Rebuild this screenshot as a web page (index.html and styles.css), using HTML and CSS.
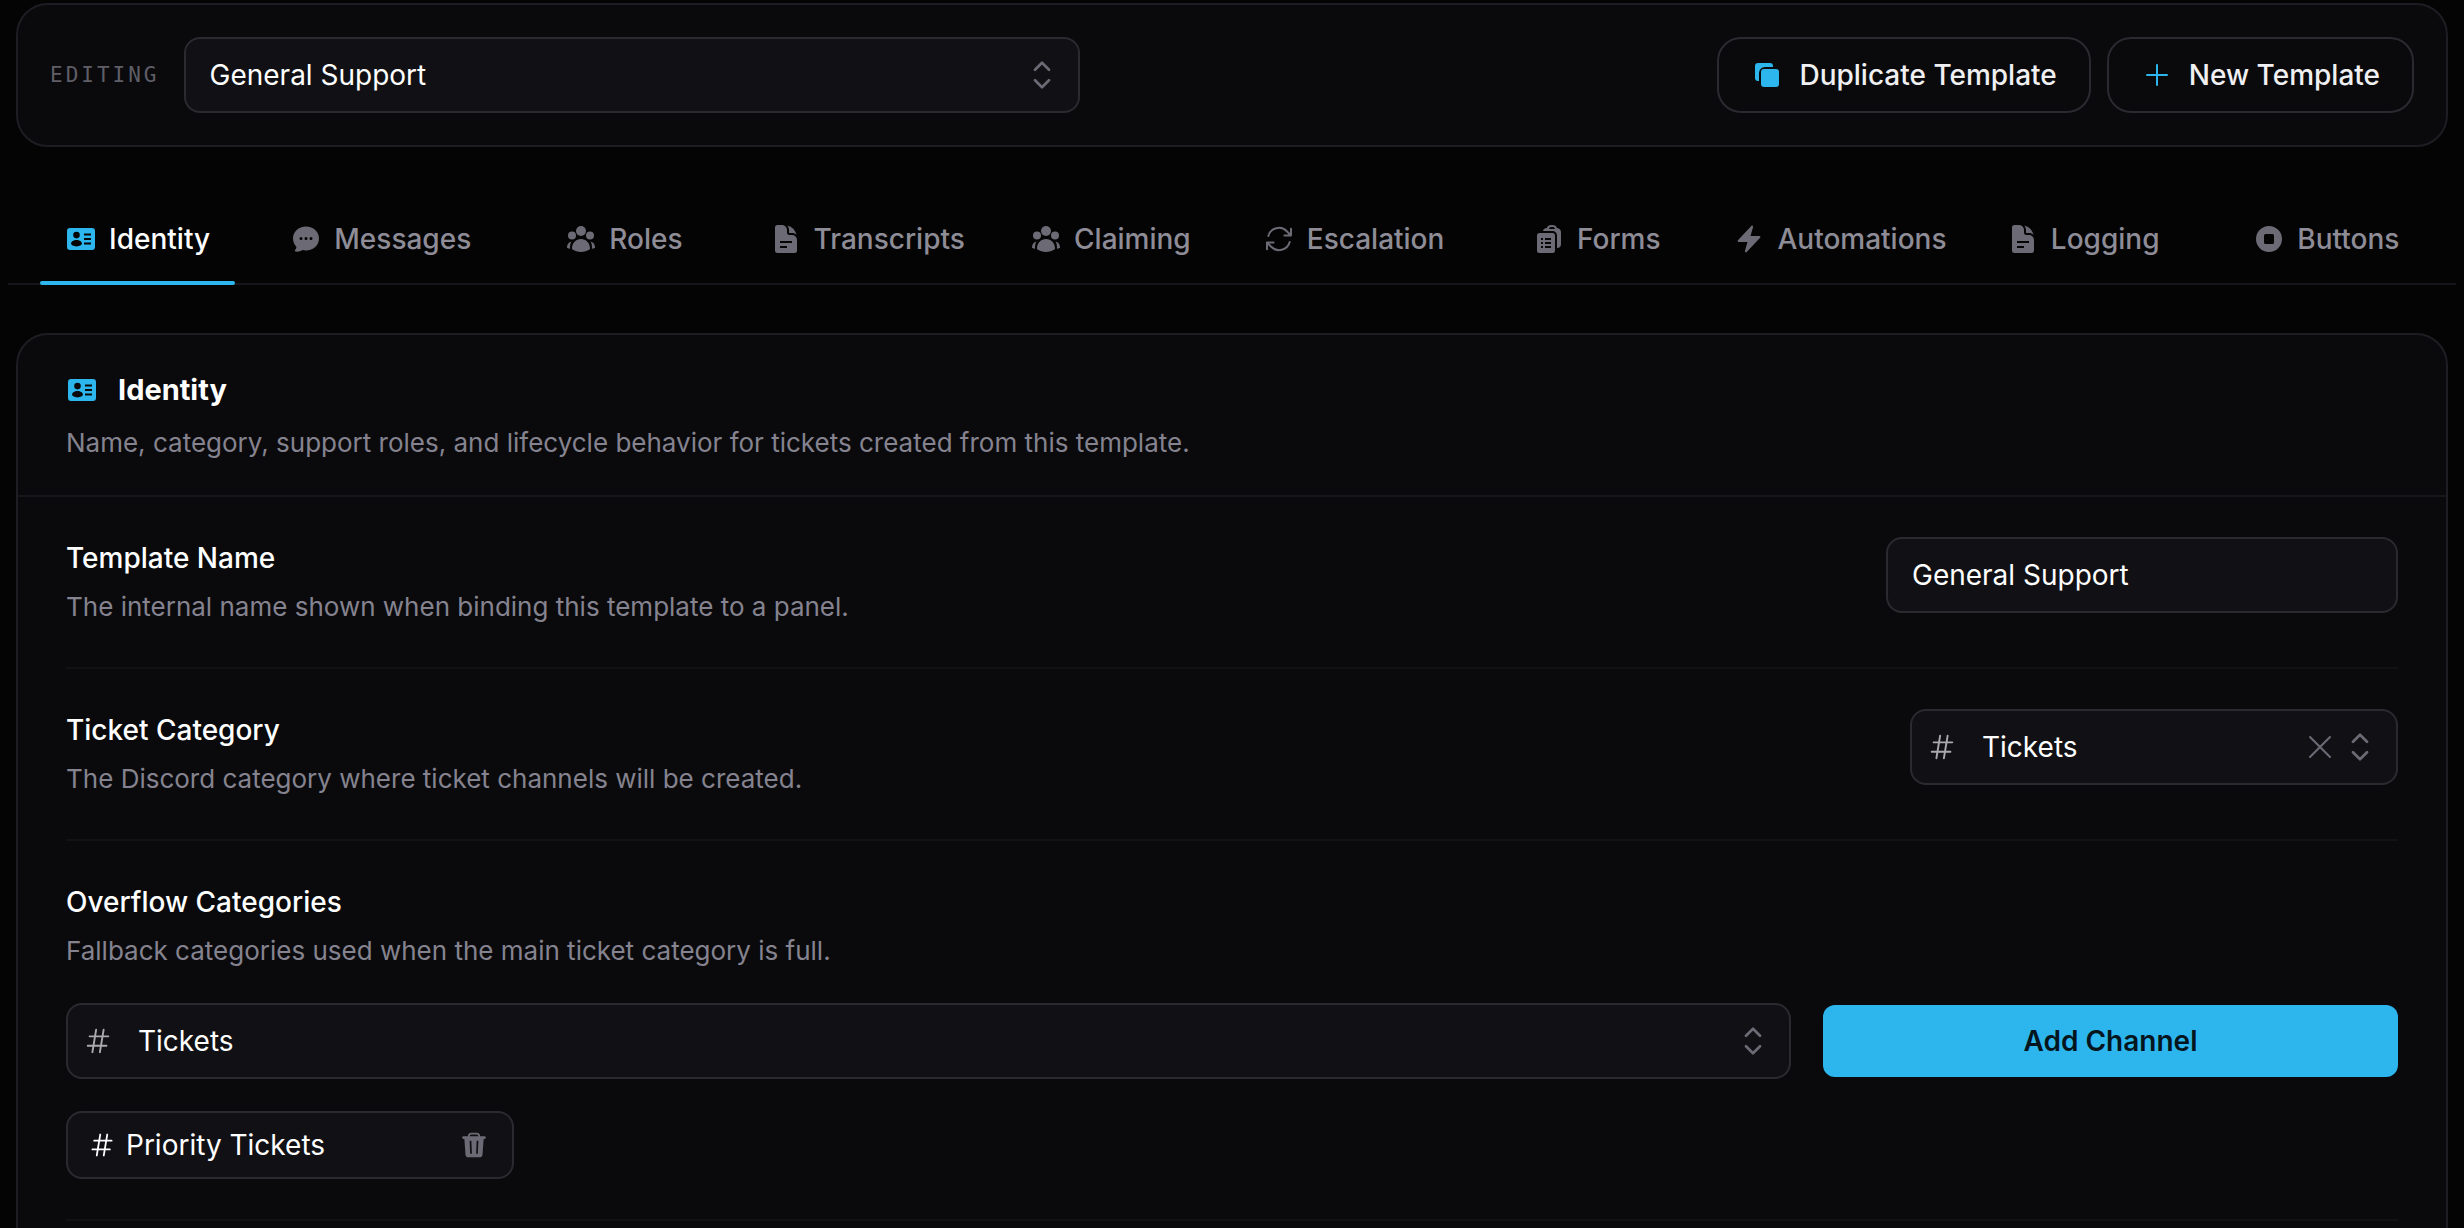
FILE: index.html
```html
<!DOCTYPE html>
<html lang="en">
<head>
    <meta charset="UTF-8">
    <meta name="viewport" content="width=device-width, initial-scale=1.0">
    <title>Ticket Templates</title>
    <link rel="stylesheet" href="styles.css">
</head>
<body>

<!-- Icon set -->
<svg class="sprite" aria-hidden="true">
    <symbol id="icon-identity" viewBox="0 0 32 32">
        <path fill-rule="evenodd" d="M5 5h22a3 3 0 0 1 3 3v16a3 3 0 0 1-3 3H5a3 3 0 0 1-3-3V8a3 3 0 0 1 3-3zM11.500 8.800a3.300 3.300 0 1 0 0 6.600 3.300 3.300 0 0 0 0-6.600zM6 20.600c0 1.600 2.400 2.800 5.500 2.800s5.500-1.200 5.500-2.800c0-1.900-2.400-3.600-5.500-3.600S6 18.700 6 20.600zM19 10.500v2h7v-2zM19 15v2h7v-2zM19 19.500v2h7v-2z"/>
    </symbol>
    <symbol id="icon-messages" viewBox="0 0 32 32">
        <path fill-rule="evenodd" d="M16 3.500c7.400 0 13 5.200 13 12s-5.600 12-13 12c-1.200 0-2.400-.1-3.500-.4-1.900 1.200-4.300 1.800-6.700 1.500-.9-.1-1.300-.9-.7-1.600.8-.9 1.300-2 1.300-3.200C4.300 21.600 3 18.700 3 15.500c0-6.800 5.600-12 13-12zM11 14a1.500 1.500 0 1 0 0 3 1.500 1.500 0 0 0 0-3zm5 0a1.500 1.500 0 1 0 0 3 1.500 1.500 0 0 0 0-3zm5 0a1.500 1.500 0 1 0 0 3 1.500 1.500 0 0 0 0-3z"/>
    </symbol>
    <symbol id="icon-group" viewBox="0 0 32 32">
        <circle cx="16" cy="8" r="5"/>
        <circle cx="7" cy="12.500" r="4"/>
        <circle cx="25" cy="12.500" r="4"/>
        <path d="M7 25.500c0-5.600 4-9.500 9-9.500s9 3.900 9 9.500c0 .5-.2.900-.6 1.100-2.300 1.500-5.200 2.400-8.400 2.400s-6.100-.9-8.400-2.400c-.4-.2-.6-.6-.6-1.100z"/>
        <path d="M6.500 18.500c-1.200 2.100-1.700 4.400-1.400 7.300-1-.1-2-.4-2.700-.8-.3-.1-.4-.3-.4-.6 0-3 1.700-5.500 4.500-5.900z"/>
        <path d="M25.500 18.500c1.200 2.100 1.700 4.400 1.400 7.300 1-.1 2-.4 2.700-.8.3-.1.400-.3.400-.6 0-3-1.700-5.500-4.500-5.900z"/>
    </symbol>
    <symbol id="icon-document" viewBox="0 0 32 32">
        <path fill-rule="evenodd" d="M7.500 2H12a5 5 0 0 1 5 5v2.500A2.500 2.500 0 0 0 19.500 12H22a5 5 0 0 1 5 5v10.500a2.500 2.500 0 0 1-2.500 2.500h-17A2.500 2.500 0 0 1 5 27.500v-23A2.500 2.500 0 0 1 7.500 2zM10 18v2h12v-2zM10 23v2h7v-2z"/>
        <path d="M17.300 2.400c1 1.300 1.700 2.900 1.700 4.600v2.500c0 .3.200.5.500.5H22c1.700 0 3.300.6 4.600 1.700A13.400 13.400 0 0 0 17.300 2.400z"/>
    </symbol>
    <symbol id="icon-refresh" viewBox="0 0 32 32">
        <path fill="none" stroke="currentColor" stroke-width="2" stroke-linecap="round" stroke-linejoin="round" d="M21.400 12.500h6.600m0 0V5.800m0 6.700-4.200-4.300A11 11 0 0 0 5.300 13M4 26.200v-6.700m0 0h6.600m-6.600 0 4.200 4.300A11 11 0 0 0 26.700 19"/>
    </symbol>
    <symbol id="icon-forms" viewBox="0 0 32 32">
        <path fill-rule="evenodd" d="M6.500 10h13a2.500 2.500 0 0 1 2.500 2.500v15a2.500 2.500 0 0 1-2.500 2.500h-13A2.500 2.500 0 0 1 4 27.500v-15A2.500 2.500 0 0 1 6.500 10zM8 15v2h2v-2zm4 0v2h6v-2zM8 19v2h2v-2zm4 0v2h6v-2zM8 23v2h2v-2zm4 0v2h6v-2z"/>
        <path fill-rule="evenodd" d="M10 8h9.500a4.500 4.500 0 0 1 4.500 4.500V25a4 4 0 0 0 4-4V9c0-2.200-1.700-3.900-3.900-4.100A4.500 4.500 0 0 0 20 2h-2a4.500 4.500 0 0 0-4.200 3C11.700 5.200 10.200 6.200 10 8zM16 6c.2-1.200 1-2 2-2h2c1 0 1.800.8 2 2z"/>
    </symbol>
    <symbol id="icon-bolt" viewBox="0 0 32 32">
        <path d="M19.500 2.800c.5.200.7.700.6 1.300L17.500 13H26.400c.9 0 1.300 1 .7 1.700l-13.400 14.200c-.8.800-2 .2-1.800-.9L14.500 19H5.600c-.9 0-1.300-1-.7-1.700L18.300 2.900c.3-.3.800-.4 1.200-.1z"/>
    </symbol>
    <symbol id="icon-stop" viewBox="0 0 32 32">
        <path fill-rule="evenodd" d="M16 3a13 13 0 1 0 0 26 13 13 0 0 0 0-26zM12.500 11h7a1.500 1.500 0 0 1 1.500 1.500v7a1.500 1.500 0 0 1-1.500 1.500h-7a1.500 1.500 0 0 1-1.500-1.500v-7a1.500 1.500 0 0 1 1.500-1.500z"/>
    </symbol>
    <symbol id="icon-duplicate" viewBox="0 0 32 32">
        <path d="M7 4h12a3 3 0 0 1 3 3v1h-8a6 6 0 0 0-6 6v8H7a3 3 0 0 1-3-3V7a3 3 0 0 1 3-3z"/>
        <rect x="10" y="10" width="18" height="18" rx="3"/>
    </symbol>
    <symbol id="icon-plus" viewBox="0 0 32 32">
        <path fill="none" stroke="currentColor" stroke-width="2" stroke-linecap="round" d="M16 6v20M6 16h20"/>
    </symbol>
    <symbol id="icon-hash" viewBox="0 0 32 32">
        <path fill="none" stroke="currentColor" stroke-width="2" stroke-linecap="round" d="M7 11h20M5 21h20M14 4l-4 24M22 4l-4 24"/>
    </symbol>
    <symbol id="icon-close" viewBox="0 0 32 32">
        <path fill="none" stroke="currentColor" stroke-width="2" stroke-linecap="round" d="M6 6l20 20M26 6L6 26"/>
    </symbol>
    <symbol id="icon-chevrons" viewBox="0 0 32 32">
        <path fill="none" stroke="currentColor" stroke-width="3" stroke-linecap="round" stroke-linejoin="round" d="M8 10l8-8 8 8M8 22l8 8 8-8"/>
    </symbol>
    <symbol id="icon-trash" viewBox="0 0 32 32">
        <path fill-rule="evenodd" d="M13 2h6a4 4 0 0 1 4 4h5a1 1 0 0 1 0 3h-1l-1.300 18a3.500 3.500 0 0 1-3.500 3H9.800a3.500 3.500 0 0 1-3.500-3L5 9H4a1 1 0 0 1 0-3h5a4 4 0 0 1 4-4zm0 2a2 2 0 0 0-2 2h10a2 2 0 0 0-2-2zM11 11l.6 15h2L13 11zm8 0l-.6 15h2L21 11z"/>
    </symbol>
</svg>

<main class="page">
    <div class="toolbar card">
        <label class="toolbar-label" for="template">EDITING</label>
        <div class="select toolbar-select">
            <select id="template">
                <option>General Support</option>
            </select>
            <svg class="icon chevrons"><use href="#icon-chevrons"/></svg>
        </div>
        <div class="toolbar-actions">
            <button type="button" class="btn">
                <svg class="icon"><use href="#icon-duplicate"/></svg>
                Duplicate Template
            </button>
            <button type="button" class="btn">
                <svg class="icon"><use href="#icon-plus"/></svg>
                New Template
            </button>
        </div>
    </div>

    <nav class="tabs">
        <a href="#identity" class="tab active"><svg class="icon"><use href="#icon-identity"/></svg>Identity</a>
        <a href="#messages" class="tab"><svg class="icon"><use href="#icon-messages"/></svg>Messages</a>
        <a href="#roles" class="tab"><svg class="icon"><use href="#icon-group"/></svg>Roles</a>
        <a href="#transcripts" class="tab"><svg class="icon"><use href="#icon-document"/></svg>Transcripts</a>
        <a href="#claiming" class="tab"><svg class="icon"><use href="#icon-group"/></svg>Claiming</a>
        <a href="#escalation" class="tab"><svg class="icon"><use href="#icon-refresh"/></svg>Escalation</a>
        <a href="#forms" class="tab"><svg class="icon"><use href="#icon-forms"/></svg>Forms</a>
        <a href="#automations" class="tab"><svg class="icon"><use href="#icon-bolt"/></svg>Automations</a>
        <a href="#logging" class="tab"><svg class="icon"><use href="#icon-document"/></svg>Logging</a>
        <a href="#buttons" class="tab"><svg class="icon"><use href="#icon-stop"/></svg>Buttons</a>
    </nav>

    <section class="panel card" id="identity">
        <header class="panel-header">
            <h2 class="panel-title"><svg class="icon"><use href="#icon-identity"/></svg>Identity</h2>
            <p class="description">Name, category, support roles, and lifecycle behavior for tickets created from this template.</p>
        </header>

        <div class="panel-body">
            <div class="row">
                <div class="row-text">
                    <label class="row-title" for="templateName">Template Name</label>
                    <p class="description">The internal name shown when binding this template to a panel.</p>
                </div>
                <input type="text" class="input" id="templateName" value="General Support">
            </div>

            <div class="row">
                <div class="row-text">
                    <label class="row-title" for="ticketCategory">Ticket Category</label>
                    <p class="description">The Discord category where ticket channels will be created.</p>
                </div>
                <div class="select with-hash category-select">
                    <svg class="icon hash"><use href="#icon-hash"/></svg>
                    <select id="ticketCategory">
                        <option>Tickets</option>
                    </select>
                    <button type="button" class="clear" aria-label="Clear"><svg class="icon"><use href="#icon-close"/></svg></button>
                    <svg class="icon chevrons"><use href="#icon-chevrons"/></svg>
                </div>
            </div>

            <div class="row stacked">
                <div class="row-text">
                    <label class="row-title" for="overflowCategory">Overflow Categories</label>
                    <p class="description">Fallback categories used when the main ticket category is full.</p>
                </div>
                <div class="add-row">
                    <div class="select with-hash">
                        <svg class="icon hash"><use href="#icon-hash"/></svg>
                        <select id="overflowCategory">
                            <option>Tickets</option>
                        </select>
                        <svg class="icon chevrons"><use href="#icon-chevrons"/></svg>
                    </div>
                    <button type="button" class="btn-primary">Add Channel</button>
                </div>
                <div class="chip">
                    <svg class="icon"><use href="#icon-hash"/></svg>
                    <span class="chip-name">Priority Tickets</span>
                    <button type="button" class="chip-remove" aria-label="Remove"><svg class="icon"><use href="#icon-trash"/></svg></button>
                </div>
            </div>
        </div>
    </section>
</main>

</body>
</html>
```
FILE: styles.css
```css
* {
    box-sizing: border-box;
}
html {
    scrollbar-width: none;
}
body {
    margin: 0;
    background-color: #040404;
    color: #fff;
    font-family: Inter, "Liberation Sans", sans-serif;
    font-size: 28px;
    line-height: 42px;
}
h2, p {
    margin: 0;
}
button, input, select {
    font: inherit;
    color: inherit;
}
button {
    cursor: pointer;
}
.sprite {
    display: none;
}
.icon {
    width: 32px;
    height: 32px;
    flex-shrink: 0;
    fill: currentColor;
}
.page {
    padding: 3px 8px 0;
}
.card {
    margin: 0 8px;
    background-color: #0a0a0c;
    border: 2px solid #1d1d23;
    border-radius: 32px;
}

/* Toolbar */
.toolbar {
    display: flex;
    align-items: center;
    gap: 24px;
    padding: 32px;
}
.toolbar-label {
    color: #5f5e67;
    font-family: "DejaVu Sans Mono", monospace;
    font-size: 21px;
    letter-spacing: 3px;
}
.toolbar-select {
    flex: 0 1 896px;
}
.toolbar-actions {
    display: flex;
    gap: 16px;
    margin-left: auto;
}
.btn {
    display: flex;
    align-items: center;
    gap: 16px;
    height: 76px;
    padding: 0 32px;
    background: none;
    border: 2px solid #2a2a31;
    border-radius: 24px;
    color: #f0f0f2;
    font-weight: 500;
    white-space: nowrap;
}
.btn .icon {
    color: #2db6ed;
}

/* Fields */
.input,
.select select {
    width: 100%;
    height: 76px;
    padding: 0 24px;
    background-color: #111115;
    border: 2px solid #2a2a31;
    border-radius: 16px;
}
.input {
    flex: 0 0 512px;
}
.select {
    position: relative;
}
.select select {
    appearance: none;
    padding-right: 72px;
}
.select .icon {
    color: #6c6b75;
}
.select .chevrons {
    position: absolute;
    top: 24px;
    right: 24px;
    width: 28px;
    height: 28px;
    pointer-events: none;
}
.select .hash {
    position: absolute;
    top: 23px;
    left: 17px;
    width: 30px;
    height: 30px;
    color: #a9a9ae;
    pointer-events: none;
}
.select.with-hash select {
    padding-left: 70px;
}
.clear {
    position: absolute;
    top: 22px;
    right: 62px;
    display: flex;
    padding: 0;
    background: none;
    border: none;
}

/* Tabs */
.tabs {
    display: grid;
    grid-template-columns: repeat(10, 1fr);
    margin: 48px 0;
    padding: 0 8px;
    border-bottom: 2px solid #15151a;
}
.tab {
    position: relative;
    display: flex;
    align-items: center;
    justify-content: center;
    gap: 12px;
    height: 88px;
    color: #8e8c97;
    font-weight: 500;
    text-decoration: none;
}
.tab .icon {
    color: #6c6b75;
}
.tab.active {
    color: #fff;
}
.tab.active .icon {
    color: #2db6ed;
}
.tab.active::after {
    content: "";
    position: absolute;
    right: 24px;
    bottom: -2px;
    left: 24px;
    height: 4px;
    background-color: #2db6ed;
    border-radius: 2px;
}

/* Panel */
.panel {
    margin-bottom: 48px;
}
.panel-header {
    padding: 34px 48px 32px;
    border-bottom: 2px solid #17171b;
}
.panel-title {
    display: flex;
    align-items: center;
    gap: 20px;
    margin-bottom: 12px;
    font-size: 29px;
    font-weight: 700;
}
.panel-title .icon {
    color: #2db6ed;
}
.description {
    color: #85838f;
    font-size: 26px;
    line-height: 40px;
}
.panel-body {
    padding: 0 48px 48px;
}
.row {
    display: flex;
    justify-content: space-between;
    align-items: flex-start;
    gap: 32px;
    padding: 40px 0;
    border-bottom: 2px solid #121215;
}
.row-title {
    display: block;
    margin-bottom: 8px;
    font-weight: 500;
}
.category-select {
    flex: 0 0 488px;
}
.stacked {
    flex-direction: column;
    align-items: stretch;
}
.add-row {
    display: grid;
    grid-template-columns: 3fr 1fr;
    align-items: center;
    gap: 32px;
}
.btn-primary {
    height: 72px;
    background-color: #2db6ed;
    border: none;
    border-radius: 12px;
    color: #04151d;
    font-weight: 600;
}
.chip {
    display: flex;
    align-items: center;
    gap: 10px;
    width: 448px;
    height: 68px;
    padding: 0 24px 0 20px;
    background-color: #111115;
    border: 2px solid #2a2a31;
    border-radius: 16px;
}
.chip .icon {
    width: 28px;
    height: 28px;
}
.chip-name {
    flex: 1;
}
.chip-remove {
    display: flex;
    padding: 0;
    background: none;
    border: none;
    color: #6c6b75;
}
```
